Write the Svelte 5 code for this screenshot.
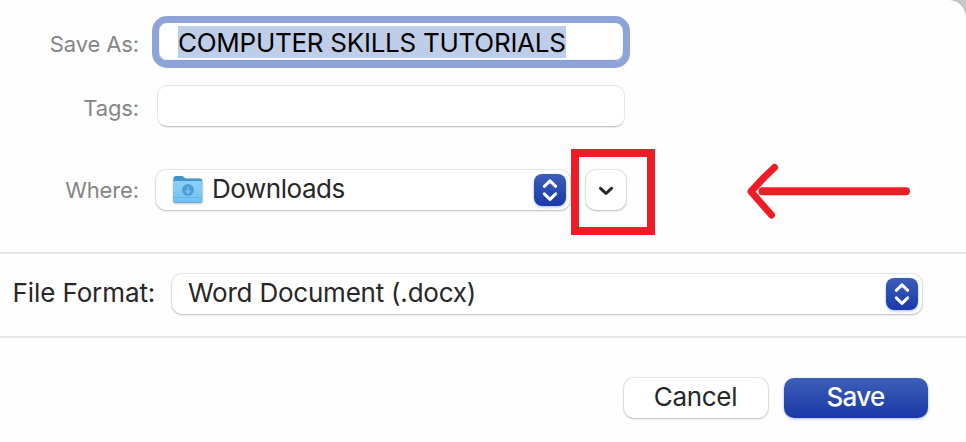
<script>
  let filename = $state('COMPUTER SKILLS TUTORIALS');
</script>

{#snippet stepper()}
  <svg class="stepper" viewBox="0 0 32 32" aria-hidden="true">
    <path d="M10.300 12.300 16 6.800l5.700 5.500M10.300 19.900 16 25.400l5.700-5.500" />
  </svg>
{/snippet}

<main class="dialog">
  <section class="details">
    <div class="row save-row">
      <span class="label"><span>Save As:</span></span>
      <div class="name-field"><span class="selection">{filename}</span></div>
    </div>
    <div class="row tags-row">
      <span class="label"><span>Tags:</span></span>
      <div class="tags-field"></div>
    </div>
    <div class="row where-row">
      <span class="label"><span>Where:</span></span>
      <div class="select where-select">
        <svg class="folder" viewBox="0 0 32 30" aria-hidden="true">
          <defs>
            <linearGradient id="front" x1="0" y1="0" x2="0" y2="1">
              <stop offset="0" stop-color="#8ed0f6" />
              <stop offset="1" stop-color="#72c0f0" />
            </linearGradient>
          </defs>
          <path d="M1.500 27V3.500Q1.500 1 4 1h5.500q1.500 0 2.500 1.200T14.500 3.500H28q2.200 0 2.200 2.200V27z" fill="#4593cc" />
          <path d="M1.300 7.500Q1.300 6 3 6H28.700Q30.300 6 30.300 7.500V26q0 1.800-1.800 1.800H3.100Q1.300 27.800 1.300 26z" fill="url(#front)" />
          <path d="M1.800 22.500H29.800" stroke="#5eafe2" stroke-width=".8" />
          <path d="M2 27.500H29.600" stroke="#55a5d9" stroke-width=".8" />
          <circle cx="16" cy="15" r="6" fill="#4b9fd6" />
          <path d="M16 11.800V18M13.500 15.700 16 18.200l2.500-2.500" fill="none" stroke="#85c8f0" stroke-width="1.200" />
        </svg>
        <span class="folder-name">Downloads</span>
        {@render stepper()}
      </div>
      <button class="expand" aria-label="Expand">
        <svg viewBox="0 0 16 10"><path d="M2.500 2.300 8 7.500l5.500-5.200" /></svg>
      </button>
    </div>
  </section>

  <section class="format">
    <span class="format-label">File Format:</span>
    <div class="select format-select">
      <span class="format-name">Word Document (.docx)</span>
      {@render stepper()}
    </div>
  </section>

  <footer>
    <button class="cancel"><span>Cancel</span></button>
    <button class="save"><span>Save</span></button>
  </footer>

  <div class="highlight"></div>
  <svg class="arrow" viewBox="0 0 170 62" aria-hidden="true">
    <path d="M18.500 31.300H162" stroke-width="8" />
    <path d="M30.500 7.500 20 17.500 7 31.500 13 38.500 27.500 55" stroke-width="7" />
  </svg>
</main>

<style>
  :global(body) { background: #c9c9c9; overflow: hidden; }
  .dialog {
    position: relative;
    box-sizing: border-box;
    width: 966px;
    height: 442px;
    overflow: hidden;
    background: #fefefe;
    border-top-right-radius: 17px;
    box-shadow: 0 0 2px #888;
    color: #272727;
    font: 26px/32px Inter, "Liberation Sans", sans-serif;
    white-space: nowrap;
  }
  .details {
    box-sizing: border-box;
    height: 254px;
    padding-top: 16px;
    border-bottom: 2px solid #e5e5e5;
  }
  .row { display: flex; align-items: center; }
  .label {
    display: flex;
    justify-content: flex-end;
    width: 139px;
    margin-right: 1px;
    flex: none;
    color: #858585;
    font-size: 22px;
    letter-spacing: -.12px;
  }
  .save-row { height: 52px; }
  .label > span { padding-top: 3px; }
  .where-row .label > span { padding: 0 0 1px; }
  .name-field {
    box-sizing: border-box;
    display: flex;
    width: 478px;
    height: 52px;
    margin-left: 12px;
    padding: 3px 19px;
    border: 7px solid #8ea4d8;
    border-radius: 15px;
    background: #fff;
    box-shadow: inset 0 -1px 1px #7e94c8;
    color: #000;
  }
  .selection {
    width: 388px;
    height: 32px;
    background: #bfcee8;
    line-height: 34px;
    letter-spacing: -.27px;
  }
  .tags-row { height: 42px; margin-top: 17px; }
  .tags-field {
    box-sizing: border-box;
    width: 468px;
    height: 42px;
    margin-left: 17px;
    border: 1px solid #e7e7e7;
    border-bottom-color: #c4c4c4;
    border-radius: 10px;
    background: #fff;
    box-shadow: 0 1px 0 #ececec;
  }
  .where-row { height: 42px; margin-top: 42px; }
  .select {
    box-sizing: border-box;
    display: flex;
    align-items: center;
    height: 40px;
    border-radius: 10px;
    background: #fff;
    box-shadow: 0 1px 2px #c0c0c0, 0 0 1px 1px #e6e6e6;
  }
  .select > span { margin-bottom: 2px; }
  .where-select { width: 414px; margin-left: 16px; padding: 0 4px 0 16px; }
  .folder { width: 32px; height: 30px; margin-right: 8px; filter: drop-shadow(0 1px 1px #9999); }
  .folder-name { letter-spacing: -.45px; }
  .stepper {
    width: 32px;
    height: 32px;
    margin-left: auto;
    border-radius: 8px;
    background: linear-gradient(#3c5eb7, #1939a8);
    box-shadow: 0 1px 3px #aab8e8;
    fill: none;
    stroke: #fff;
    stroke-width: 3;
    stroke-linecap: round;
    stroke-linejoin: round;
  }
  button {
    box-sizing: border-box;
    display: flex;
    align-items: center;
    justify-content: center;
    padding: 0;
    border: 0;
    border-radius: 10px;
    background: #fff;
    box-shadow: 0 1px 2px #c0c0c0, 0 0 1px 1px #e6e6e6;
    color: inherit;
    font: inherit;
  }
  .expand { width: 40px; height: 40px; margin-left: 16px; }
  .expand svg { width: 16px; height: 10px; margin-top: 2px; fill: none; stroke: #272727; stroke-width: 3; stroke-linecap: round; stroke-linejoin: round; }
  .format {
    box-sizing: border-box;
    display: flex;
    align-items: center;
    height: 84px;
    padding-left: 12.5px;
    border-bottom: 2px solid #e5e5e5;
  }
  .format-label { width: 159.5px; margin-bottom: 4px; letter-spacing: -.1px; }
  .format-select { width: 750px; padding: 0 4px 0 16px; margin-top: -2px; }
  .format-name { letter-spacing: -.22px; }
  footer { display: flex; justify-content: flex-end; gap: 16px; padding: 40px 38px 0 0; }
  footer button { width: 144px; height: 40px; padding-right: 1px; }
  footer button span { margin-bottom: 2px; }
  .cancel { letter-spacing: -.3px; }
  .save {
    background: linear-gradient(#3e5fb8, #1838a7);
    box-shadow: 0 1px 3px #aab8e8;
    color: #fff;
    font-weight: 500;
    letter-spacing: -.7px;
  }
  .highlight {
    position: absolute;
    box-sizing: border-box;
    left: 571px;
    top: 149px;
    width: 84px;
    height: 86px;
    border: 8px solid #ee1c25;
  }
  .arrow {
    position: absolute;
    left: 744px;
    top: 160px;
    width: 170px;
    height: 62px;
    fill: none;
    stroke: #ee1c25;
    stroke-linecap: round;
    stroke-linejoin: round;
  }
</style>
